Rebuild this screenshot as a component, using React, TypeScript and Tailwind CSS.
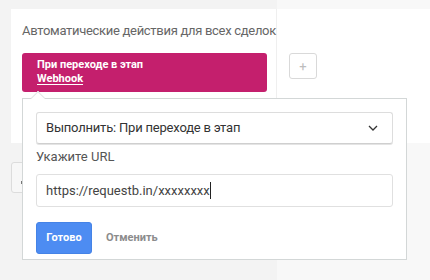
import React from "react";

export default function App() {
  return (
    <div
      className="relative flex w-[430px] h-[280px] overflow-hidden"
      style={{ fontFamily: 'Roboto, "Noto Sans", Arial, sans-serif' }}
    >
      {/* left column */}
      <div className="w-[277px] h-full bg-[#f3f3f3] pt-[9px] pl-[11px] flex flex-col">
        <div className="h-[134px] bg-white border-r border-[#efefef] pl-[11px] pt-[13px] flex flex-col">
          <div className="text-[13px] leading-[18px] text-[#666] whitespace-nowrap tracking-[-0.3px]">
            Автоматические действия для всех сделок
          </div>
          <div className="mt-[13px] w-[245px] h-[39px] rounded-[3px] bg-[#c41f6d] pl-[15px] pt-[5px] text-white text-[11px] font-bold leading-[13px]">
            <div>При переходе в этап</div>
            <div className="underline underline-offset-2 mt-[1px]">Webhook</div>
          </div>
        </div>
        <div className="relative mt-[19px] w-[30px] h-[31px] rounded-[3px] border border-[#dcdcdc] bg-[#f7f7f7]">
          <span className="absolute left-[9px] top-[18px] w-[1px] h-[3px] bg-[#777]" />
        </div>
      </div>
      {/* right column */}
      <div className="flex-1 h-full bg-[#f8f8f8] pt-[9px]">
        <div className="h-[134px] bg-white pl-[12px] pt-[44px]">
          <div className="w-[28px] h-[26px] rounded-[3px] border border-[#d9d9d9] flex items-center justify-center text-[#bdbdbd] text-[13px] leading-none">
            +
          </div>
        </div>
      </div>

      {/* popover */}
      <div className="absolute left-[22px] top-[98px] w-[385px] h-[162px] bg-white border border-[#d3d7d7] px-[13px] pt-[13px]">
        {/* arrow */}
        <div className="absolute left-[10px] top-[-6px] w-[10px] h-[10px] bg-white border-l border-t border-[#e3e6e6] rotate-45" />
        <div className="relative h-[32px] w-[357px] rounded-[3px] border border-[#dddddd] border-b-[#cfcfcf] shadow-[0_1px_0_#e4e4e4] flex items-center pl-[9px] pr-[14px]">
          <span className="text-[13px] text-[#333] whitespace-nowrap tracking-[-0.2px]">
            Выполнить: При переходе в этап
          </span>
          <svg className="ml-auto" width="10" height="6" viewBox="0 0 10 6" fill="none">
            <path d="M1 1 L5 5 L9 1" stroke="#333" strokeWidth="1.3" />
          </svg>
        </div>
        <div className="mt-[4px] text-[13px] leading-[18px] text-[#555]">Укажите URL</div>
        <div className="mt-[8px] h-[33px] w-[357px] rounded-[3px] border border-[#e0e0e0] flex items-center pl-[9px]">
          <span className="text-[13px] text-[#444] whitespace-nowrap">https://requestb.in/xxxxxxxx</span>
          <span className="inline-block w-[1px] h-[17px] bg-[#222]" />
        </div>
        <div className="mt-[15px] flex items-center">
          <div className="w-[56px] h-[32px] rounded-[3px] bg-[#4d8cf2] border border-[#4583e6] flex items-center justify-center text-white text-[11px] font-bold">
            Готово
          </div>
          <div className="ml-[14px] text-[11px] font-bold text-[#8c8c8c]">Отменить</div>
        </div>
      </div>
    </div>
  );
}
